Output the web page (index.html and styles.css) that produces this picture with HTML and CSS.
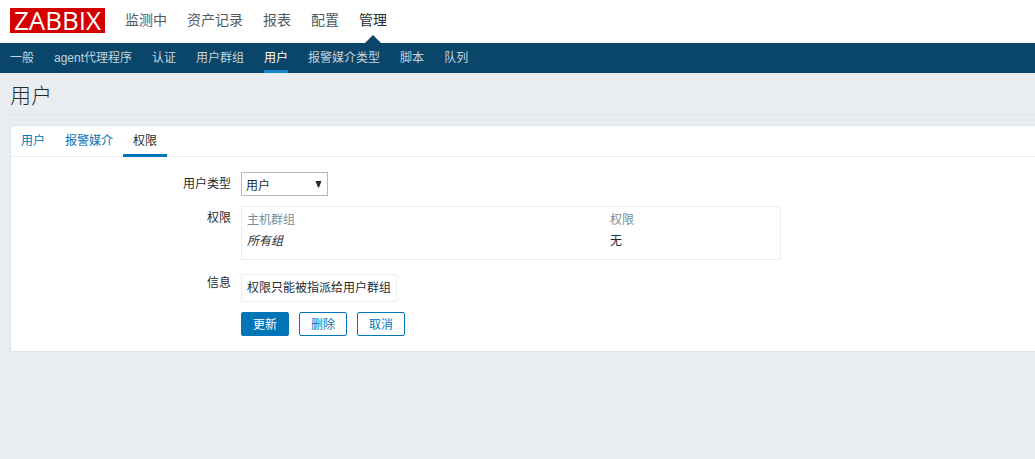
FILE: index.html
```html
<!DOCTYPE html>
<html lang="zh-CN">
<head>
<meta charset="utf-8">
<title>用户</title>
<meta name="viewport" content="width=device-width, initial-scale=1">
<link rel="stylesheet" href="styles.css">
</head>
<body>
<header class="top">
  <a class="logo" href="#">ZABBIX</a>
  <nav class="menu">
    <a href="#">监测中</a>
    <a href="#">资产记录</a>
    <a href="#">报表</a>
    <a href="#">配置</a>
    <a href="#" class="current">管理</a>
  </nav>
</header>
<nav class="submenu">
  <a href="#">一般</a>
  <a href="#">agent代理程序</a>
  <a href="#">认证</a>
  <a href="#">用户群组</a>
  <a href="#" class="current">用户</a>
  <a href="#">报警媒介类型</a>
  <a href="#">脚本</a>
  <a href="#">队列</a>
</nav>
<main class="content">
  <h1 class="title">用户</h1>
  <form class="panel">
    <nav class="tabs">
      <a href="#">用户</a>
      <a href="#">报警媒介</a>
      <a href="#" class="current">权限</a>
    </nav>
    <div class="form">
      <label class="label" for="type">用户类型</label>
      <div class="select">
        <select id="type"><option>用户</option></select>
        <svg class="arrow" viewBox="0 0 7 7" aria-hidden="true"><path d="M0.500 0H6.500L4 6.500H3Z"/></svg>
      </div>
      <div class="label">权限</div>
      <div class="box rights">
        <table>
          <thead><tr><th>主机群组</th><th>权限</th></tr></thead>
          <tbody><tr><td><em>所有组</em></td><td>无</td></tr></tbody>
        </table>
      </div>
      <div class="label label-info">信息</div>
      <div class="box info">权限只能被指派给用户群组</div>
      <div class="buttons">
        <button type="button" class="primary">更新</button>
        <button type="button">删除</button>
        <button type="button">取消</button>
      </div>
    </div>
  </form>
</main>
</body>
</html>
```
FILE: styles.css
```css
* { box-sizing: border-box; }

body {
  margin: 0;
  background: #e9edf0;
  color: #1f2c33;
  font: 12px/18px "Liberation Sans", "Noto Sans CJK SC", sans-serif;
}

a { color: #0275b8; text-decoration: none; }

.top {
  display: flex;
  align-items: flex-start;
  gap: 20px;
  height: 43px;
  padding: 8px 10px 0;
  background: #fff;
}

.logo {
  width: 95px;
  height: 25px;
  background: #d40000;
  color: #fff;
  font: 26px/25px "Open Sans", sans-serif;
  text-align: center;
}

.menu { display: flex; gap: 20px; height: 35px; }

.menu a {
  position: relative;
  color: #4f5b63;
  font-size: 14px;
  line-height: 24px;
}

.menu .current { color: #1f2c33; }

.menu .current::after {
  content: "";
  position: absolute;
  bottom: 0;
  left: 50%;
  margin-left: -8px;
  border: 8px solid transparent;
  border-top: 0;
  border-bottom-color: #0a466a;
}

.submenu {
  display: flex;
  gap: 20px;
  height: 30px;
  padding: 0 10px;
  background: #0a466a;
}

.submenu a {
  border-bottom: 3px solid transparent;
  color: #c5d4de;
  line-height: 31px;
}

.submenu .current { border-color: #1385cb; color: #fff; }

.content { padding-left: 10px; }

.title {
  height: 42px;
  margin: 0 0 10px;
  border-bottom: 1px solid #dfe4e7;
  font-size: 21px;
  font-weight: 300;
  line-height: 45px;
}

.panel {
  border: 1px solid #dfe4e7;
  border-right: 0;
  background: #fff;
}

.tabs {
  display: flex;
  height: 31px;
  border-bottom: 1px solid #ebeef0;
}

.tabs a {
  height: 31px;
  padding: 0 10px;
  border-bottom: 3px solid transparent;
  line-height: 31px;
}

.tabs .current { border-color: #0275b8; color: #1f2c33; }

.form {
  display: grid;
  grid-template-columns: 220px minmax(0, 540px);
  column-gap: 10px;
  row-gap: 10px;
  padding: 15px 10px 15px 0;
}

.label { padding-top: 3px; text-align: right; }

.label-info { padding-top: 0; }

.select { position: relative; width: 87px; height: 24px; }

.select select {
  appearance: none;
  display: block;
  width: 100%;
  height: 24px;
  padding: 3px 4px 0;
  border: 1px solid #acbbc2;
  border-radius: 0;
  background: #fff;
  color: #1f2c33;
  font: inherit;
}

.arrow {
  position: absolute;
  top: 9px;
  right: 6px;
  width: 7px;
  height: 7px;
  fill: #1f2c33;
  pointer-events: none;
}

.box { border: 1px solid #ebeef0; padding: 4px 5px; }

.rights { margin-bottom: 4px; padding: 2px 5px 8px; }

.rights table {
  width: 100%;
  border-collapse: collapse;
  table-layout: fixed;
}

.rights th, .rights td {
  height: 21px;
  padding: 0;
  text-align: left;
  font-weight: 400;
}

.rights th { color: #768d99; }

.rights th:first-child { width: 363px; }

.info { justify-self: start; }

.buttons { grid-column: 2; display: flex; gap: 10px; }

.buttons button {
  width: 48px;
  height: 24px;
  padding: 2px 0 0;
  border: 1px solid #0275b8;
  border-radius: 2px;
  background: #fff;
  color: #0275b8;
  font: inherit;
}

.buttons .primary { background: #0275b8; color: #fff; }
```
